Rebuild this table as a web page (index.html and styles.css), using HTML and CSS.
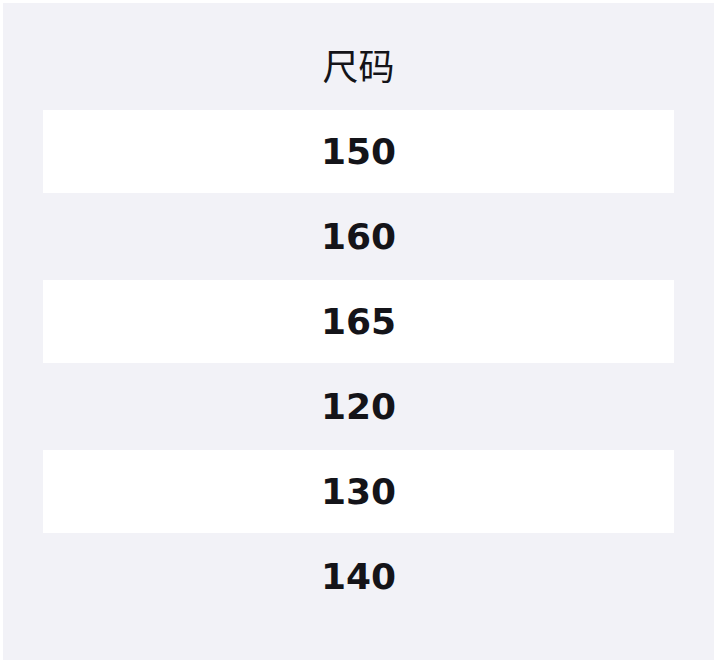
FILE: index.html
```html
<!DOCTYPE html>
<html lang="zh">
<head>
<meta charset="utf-8">
<link rel="stylesheet" href="styles.css">
</head>
<body>
<div class="panel">
  <div class="title">尺码</div>
  <div class="list">
    <div class="row odd">150</div>
    <div class="row">160</div>
    <div class="row odd">165</div>
    <div class="row">120</div>
    <div class="row odd">130</div>
    <div class="row">140</div>
  </div>
</div>
</body>
</html>
```
FILE: styles.css
```css
html, body { margin: 0; padding: 0; background: #fff; }
body { padding: 3px; }
.panel {
  background: #f2f2f7;
  height: 657px;
  box-sizing: border-box;
  padding: 40px 40px 40px;
  color: #141419;
}
.title {
  font-family: "Noto Sans CJK SC", sans-serif;
  font-size: 36px;
  line-height: 42px;
  height: 48px;
  margin-bottom: 19px;
  text-align: center;
}
.list { display: flex; flex-direction: column; }
.row {
  height: 83px;
  border-bottom: 2px solid #f2f2f7;
  display: flex;
  align-items: center;
  justify-content: center;
  font-family: "DejaVu Sans", sans-serif;
  font-weight: bold;
  font-size: 36px;
}
.row.odd { background: #fff; }
```
